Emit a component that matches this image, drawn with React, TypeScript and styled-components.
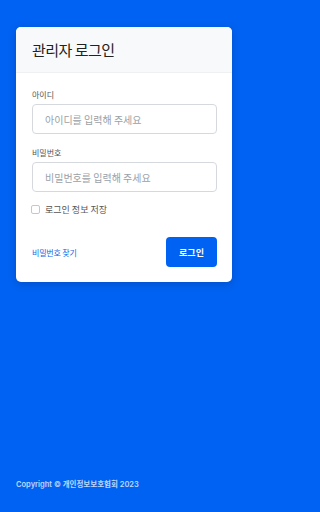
import React from "react";
import styled, { createGlobalStyle } from "styled-components";

const Global = createGlobalStyle`
  html, body { margin: 0; padding: 0; }
  body {
    background: #0062f2;
    font-family: "Noto Sans CJK KR", "Noto Sans", sans-serif;
  }
  * { box-sizing: border-box; }
`;

const Page = styled.div`
  width: 249px;
  height: 512px;
  background: #0062f2;
  padding: 27px 17px 0 16px;
  display: flex;
  flex-direction: column;
`;

const Card = styled.div`
  background: #fff;
  border-radius: 5px;
  box-shadow: 0 2px 8px rgba(0, 0, 0, 0.18);
  overflow: hidden;
`;

const Header = styled.div`
  background: #f8f9fa;
  border-bottom: 1px solid #eef0f2;
  height: 46px;
  padding: 0 16px;
  display: flex;
  align-items: center;
`;

const Title = styled.h1`
  margin: 0;
  font-size: 15px;
  font-weight: 400;
  color: #222;
  letter-spacing: -0.5px;
`;

const Body = styled.div`
  padding: 17px 15px 15px 16px;
  display: flex;
  flex-direction: column;
`;

const Field = styled.div`
  display: flex;
  flex-direction: column;
  gap: 4px;
  margin-bottom: 14px;
`;

const Label = styled.label`
  font-size: 8px;
  color: #555;
  line-height: 10px;
`;

const Input = styled.input`
  height: 30px;
  width: 100%;
  border: 1px solid #d5d9de;
  border-radius: 4px;
  padding: 0 12px;
  font-family: inherit;
  font-size: 10px;
  color: #333;
  outline: none;
  &::placeholder { color: #9ba1a7; }
`;

const CheckRow = styled.label`
  display: flex;
  align-items: center;
  gap: 5px;
  height: 12px;
  font-size: 9px;
  color: #555;
  margin-top: -3px;
`;

const Box = styled.span`
  width: 9px;
  height: 9px;
  margin-left: -1px;
  border: 1px solid #c3c8cd;
  border-radius: 2px;
  background: #fff;
`;

const Footer = styled.div`
  display: flex;
  align-items: center;
  justify-content: space-between;
  margin-top: 22px;
`;

const Link = styled.a`
  font-size: 8px;
  color: #1766e6;
  text-decoration: none;
  letter-spacing: -0.2px;
`;

const Button = styled.button`
  width: 51px;
  height: 30px;
  border: none;
  border-radius: 4px;
  background: #0062f2;
  color: #fff;
  font-family: inherit;
  font-size: 9px;
  font-weight: 700;
`;

const Copy = styled.div`
  margin-top: auto;
  margin-bottom: 23px;
  font-family: "Inter", "Noto Sans CJK KR", sans-serif;
  font-size: 7.5px;
  font-weight: 600;
  color: rgba(255, 255, 255, 0.75);
`;

export default function App() {
  return (
    <>
      <Global />
      <Page>
        <Card>
          <Header>
            <Title>관리자 로그인</Title>
          </Header>
          <Body>
            <Field>
              <Label>아이디</Label>
              <Input placeholder="아이디를 입력해 주세요" />
            </Field>
            <Field>
              <Label>비밀번호</Label>
              <Input type="password" placeholder="비밀번호를 입력해 주세요" />
            </Field>
            <CheckRow>
              <Box />
              로그인 정보 저장
            </CheckRow>
            <Footer>
              <Link href="#">비밀번호 찾기</Link>
              <Button>로그인</Button>
            </Footer>
          </Body>
        </Card>
        <Copy>Copyright © 개인정보보호협회 2023</Copy>
      </Page>
    </>
  );
}
